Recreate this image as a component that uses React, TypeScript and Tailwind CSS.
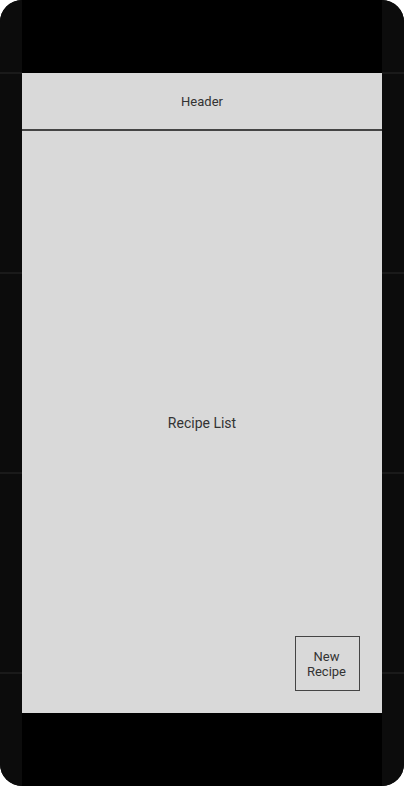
import React from "react";

const SideStrip = () => {
  return (
    <div className="w-[22px] h-full bg-[#0c0c0c] flex flex-col pt-[72px]">
      {[0, 1, 2, 3].map((i) => (
        <div key={i} className="h-[200px] shrink-0 border-t-2 border-[#1a1a1a]"></div>
      ))}
    </div>
  );
};

const App = () => {
  return (
    <div
      className="w-[404px] h-[786px] bg-black rounded-[22px] overflow-hidden flex"
      style={{ fontFamily: "Roboto, 'Liberation Sans', sans-serif" }}
    >
      <SideStrip />
      <div className="w-[360px] h-full bg-black flex flex-col py-[73px]">
        <div className="flex-1 bg-[#d9d9d9] flex flex-col relative">
          <div className="h-[58px] shrink-0 border-b-2 border-[#444444] flex items-center justify-center pt-[2px] text-[13px] text-[#333333]">
            Header
          </div>
          <div className="flex-1 flex items-center justify-center pt-[2px] text-[14px] text-[#333333]">
            Recipe List
          </div>
          <button className="absolute right-[22px] bottom-[22px] w-[65px] h-[55px] border border-[#444444] pr-[2px] text-[13px] leading-[15px] text-[#333333] flex items-center justify-center text-center">
            New
            <br />
            Recipe
          </button>
        </div>
      </div>
      <SideStrip />
    </div>
  );
};

export default App;
